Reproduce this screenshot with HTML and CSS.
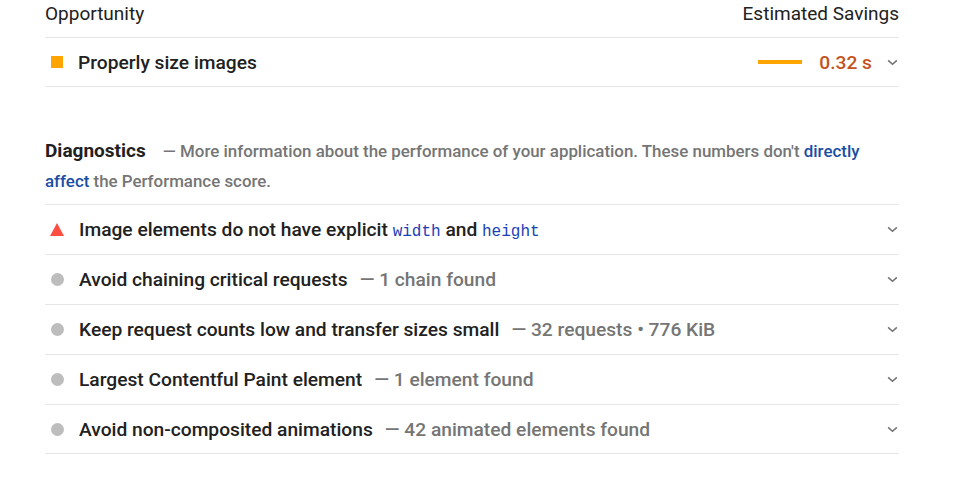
FILE: index.html
```html
<!DOCTYPE html>
<html>
<head>
<meta charset="utf-8">
<link rel="stylesheet" href="styles.css">
</head>
<body>
<div class="report">
  <div class="table-head">
    <span>Opportunity</span>
    <span>Estimated Savings</span>
  </div>
  <div class="audit first">
    <span class="icon square"></span>
    <span class="title">Properly size images</span>
    <span class="savings">
      <span class="bar"></span>
      <span class="value">0.32 s</span>
    </span>
    <svg class="chev" viewBox="0 0 12 8" width="11" height="7"><path d="M1 1.5 L6 6 L11 1.5" fill="none" stroke="#757575" stroke-width="1.8"/></svg>
  </div>

  <div class="group-head">
    <span class="group-title">Diagnostics</span>
    <span class="group-desc">— More information about the performance of your application. These numbers don't <a class="link">directly affect</a> the Performance score.</span>
  </div>

  <div class="audit">
    <span class="icon triangle"></span>
    <span class="title">Image elements do not have explicit <code>width</code> and <code>height</code></span>
    <svg class="chev" viewBox="0 0 12 8" width="11" height="7"><path d="M1 1.5 L6 6 L11 1.5" fill="none" stroke="#757575" stroke-width="1.8"/></svg>
  </div>
  <div class="audit">
    <span class="icon circle"></span>
    <span class="title">Avoid chaining critical requests</span>
    <span class="display">— 1 chain found</span>
    <svg class="chev" viewBox="0 0 12 8" width="11" height="7"><path d="M1 1.5 L6 6 L11 1.5" fill="none" stroke="#757575" stroke-width="1.8"/></svg>
  </div>
  <div class="audit">
    <span class="icon circle"></span>
    <span class="title">Keep request counts low and transfer sizes small</span>
    <span class="display">— 32 requests • 776 KiB</span>
    <svg class="chev" viewBox="0 0 12 8" width="11" height="7"><path d="M1 1.5 L6 6 L11 1.5" fill="none" stroke="#757575" stroke-width="1.8"/></svg>
  </div>
  <div class="audit">
    <span class="icon circle"></span>
    <span class="title">Largest Contentful Paint element</span>
    <span class="display">— 1 element found</span>
    <svg class="chev" viewBox="0 0 12 8" width="11" height="7"><path d="M1 1.5 L6 6 L11 1.5" fill="none" stroke="#757575" stroke-width="1.8"/></svg>
  </div>
  <div class="audit last">
    <span class="icon circle"></span>
    <span class="title">Avoid non-composited animations</span>
    <span class="display">— 42 animated elements found</span>
    <svg class="chev" viewBox="0 0 12 8" width="11" height="7"><path d="M1 1.5 L6 6 L11 1.5" fill="none" stroke="#757575" stroke-width="1.8"/></svg>
  </div>
</div>
</body>
</html>
```
FILE: styles.css
```css
html, body {
  margin: 0;
  padding: 0;
  background: #ffffff;
}
body {
  font-family: Roboto, "Liberation Sans", sans-serif;
  color: #212121;
}
.report {
  margin-left: 45px;
  width: 854px;
}
.table-head {
  display: flex;
  justify-content: space-between;
  font-size: 19px;
  line-height: 24px;
  padding: 2px 0 11px;
  border-bottom: 1px solid #e6e6e6;
  color: #212121;
}
.audit {
  display: flex;
  align-items: center;
  height: 49px;
  border-bottom: 1px solid #e6e6e6;
  font-size: 19.2px;
}
.audit.first {
  height: 48px;
}
.audit.last {
  height: 48px;
}
.icon {
  flex: none;
  width: 14px;
  height: 14px;
  margin-left: 5px;
  margin-right: 15px;
}
.square {
  width: 12px;
  height: 12px;
  margin-left: 6px;
  margin-right: 15px;
  background: #ffa400;
}
.triangle {
  width: 0;
  height: 0;
  margin-left: 5px;
  margin-right: 15px;
  border-left: 7px solid transparent;
  border-right: 7px solid transparent;
  border-bottom: 13px solid #ff4e42;
}
.circle {
  border-radius: 50%;
  background: #bdbdbd;
  width: 13px;
  height: 13px;
  margin-left: 6px;
  margin-right: 15px;
}
.title {
  font-weight: 500;
  color: #212121;
}
code {
  font-family: "Liberation Mono", "DejaVu Sans Mono", monospace;
  font-size: 16px;
  color: #1a3fb8;
  font-weight: 400;
}
.display {
  margin-left: 12px;
  color: #757575;
  font-weight: 500;
}
.savings {
  margin-left: auto;
  display: flex;
  align-items: center;
}
.bar {
  width: 44px;
  height: 4px;
  background: #ffa400;
  margin-right: 17px;
}
.value {
  color: #c5521b;
  font-weight: 500;
}
.chev {
  flex: none;
  margin-left: auto;
  margin-right: 1px;
}
.savings + .chev {
  margin-left: 15px;
}
.group-head {
  margin-top: 49px;
  padding-bottom: 8px;
  border-bottom: 1px solid #e6e6e6;
  font-size: 16.9px;
  line-height: 30px;
}
.group-title {
  font-size: 19px;
  line-height: 1;
  font-weight: 700;
  color: #212121;
  margin-right: 13px;
}
.group-desc {
  color: #757575;
  font-weight: 500;
}
.link {
  color: #1a4ea5;
  font-weight: 500;
}
```
